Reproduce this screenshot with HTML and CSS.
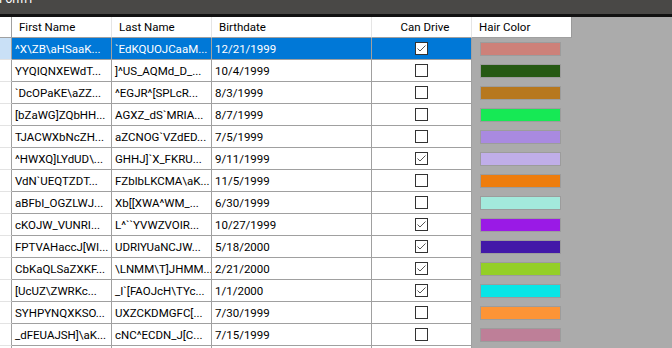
FILE: index.html
```html
<!DOCTYPE html>
<html lang="en">
<head>
  <meta charset="UTF-8" />
  <title>Form1</title>
  <link rel="stylesheet" href="styles.css">
</head>
<body>
  <div class="titlebar"><span class="title">Form1</span></div>
  <div class="grid">
    <div class="row header">
      <div class="cell rowhead"></div>
      <div class="cell first">First Name</div>
      <div class="cell last">Last Name</div>
      <div class="cell birth">Birthdate</div>
      <div class="cell drive">Can Drive</div>
      <div class="cell hair">Hair Color</div>
    </div>
    <div id="rows"></div>
  </div>

  <script>
    const people = [
      ['^X\\ZB\\aHSaaK...', '`EdKQUOJCaaM...', '12/21/1999', true, '#cd8179'],
      ['YYQIQNXEWdT...', ']^US_AQMd_D_...', '10/4/1999', false, '#265913'],
      ['`DcOPaKE\\aZZ...', '^EGJR^[SPLcR...', '8/3/1999', false, '#b7781e'],
      ['[bZaWG]ZQbHH...', 'AGXZ_dS`MRIA...', '8/7/1999', false, '#16e955'],
      ['TJACWXbNcZH...', 'aZCNOG`VZdED...', '7/5/1999', false, '#a98ae0'],
      ['^HWXQ]LYdUD\\...', 'GHHJ]`X_FKRU...', '9/11/1999', true, '#c0aee9'],
      ['VdN`UEQTZDT...', 'FZblbLKCMA\\aK...', '11/5/1999', false, '#ee7d0e'],
      ['aBFbI_OGZLWJ...', 'Xb[[XWA^WM_...', '6/30/1999', false, '#a3e9dc'],
      ['cKOJW_VUNRI...', 'L^``YVWZVOIR...', '10/27/1999', true, '#9a1ae6'],
      ['FPTVAHaccJ[WI...', 'UDRIYUaNCJW...', '5/18/2000', true, '#4318a8'],
      ['CbKaQLSaZXKF...', '\\LNMM\\T]JHMM...', '2/21/2000', true, '#94cf27'],
      ['[UcUZ\\ZWRKc...', '_I`[FAOJcH\\TYc...', '1/1/2000', true, '#09e5e6'],
      ['SYHPYNQXKSO...', 'UXZCKDMGFC[...', '7/30/1999', false, '#fd9436'],
      ['_dFEUAJSH]\\aK...', 'cNC^ECDN_J[C...', '7/15/1999', false, '#be7f98'],
      ['', '', '', false, '#ababab']
    ];

    const box = '<svg width="13" height="13" viewBox="0 0 13 13"><rect x="0.5" y="0.5" width="12" height="12" fill="#fff" stroke="#333"/>';
    const tick = '<polyline points="2.5,6.5 5,9 10.5,3.5" fill="none" stroke="#555" stroke-width="1"/>';

    const list = document.getElementById('rows');
    people.forEach((p, i) => {
      const row = document.createElement('div');
      row.className = 'row' + (i === 0 ? ' selected' : '');
      row.innerHTML = `
        <div class="cell rowhead"></div>
        <div class="cell first">${p[0]}</div>
        <div class="cell last">${p[1]}</div>
        <div class="cell birth">${p[2]}</div>
        <div class="cell drive">${box}${p[3] ? tick : ''}</svg></div>
        <div class="cell hair"><span class="swatch"></span></div>
      `;
      row.querySelector('.swatch').style.background = p[4];
      list.appendChild(row);
    });
  </script>
</body>
</html>
```
FILE: styles.css
```css
body { margin: 0; background-color: #ababab; font-family: Roboto, "Liberation Sans", sans-serif; font-size: 11.5px; color: #000; overflow: hidden; }
.titlebar { height: 14px; background-color: #494846; border-bottom: 3px solid #111; overflow: hidden; }
.title { display: block; color: #fff; font-size: 12px; line-height: 12px; margin-top: -7px; margin-left: -1px; }

.row { display: flex; height: 22px; }
.cell { box-sizing: border-box; height: 22px; display: flex; align-items: center; white-space: nowrap; overflow: hidden; background-color: #fff; border-right: 1px solid #a0a0a0; border-bottom: 1px solid #a0a0a0; padding-left: 3px; }
.rowhead { width: 12px; padding: 0; border-bottom-color: #e3e3e3; }
.first, .last, .drive, .hair { width: 100px; }
.birth { width: 160px; }
.drive { justify-content: center; padding: 0; }
.drive svg { display: block; }

.header { height: 21px; }
.header .cell { height: 21px; padding-left: 7px; border-right-color: #e5e5e5; }
.header .rowhead { padding: 0; border-right-color: #a0a0a0; border-bottom-color: #a0a0a0; }
.header .hair { border-right: 1px solid #9a9a9a; }

.row:not(.header) .hair { background-color: #ababab; border: none; padding-left: 8px; }
.swatch { display: block; width: 79px; height: 12px; border: 1px solid #9c9c9c; }

.selected .rowhead { background-color: #c9e0f6; }
.selected .first, .selected .last, .selected .birth, .selected .drive { background-color: #0078d7; color: #fff; }
```
